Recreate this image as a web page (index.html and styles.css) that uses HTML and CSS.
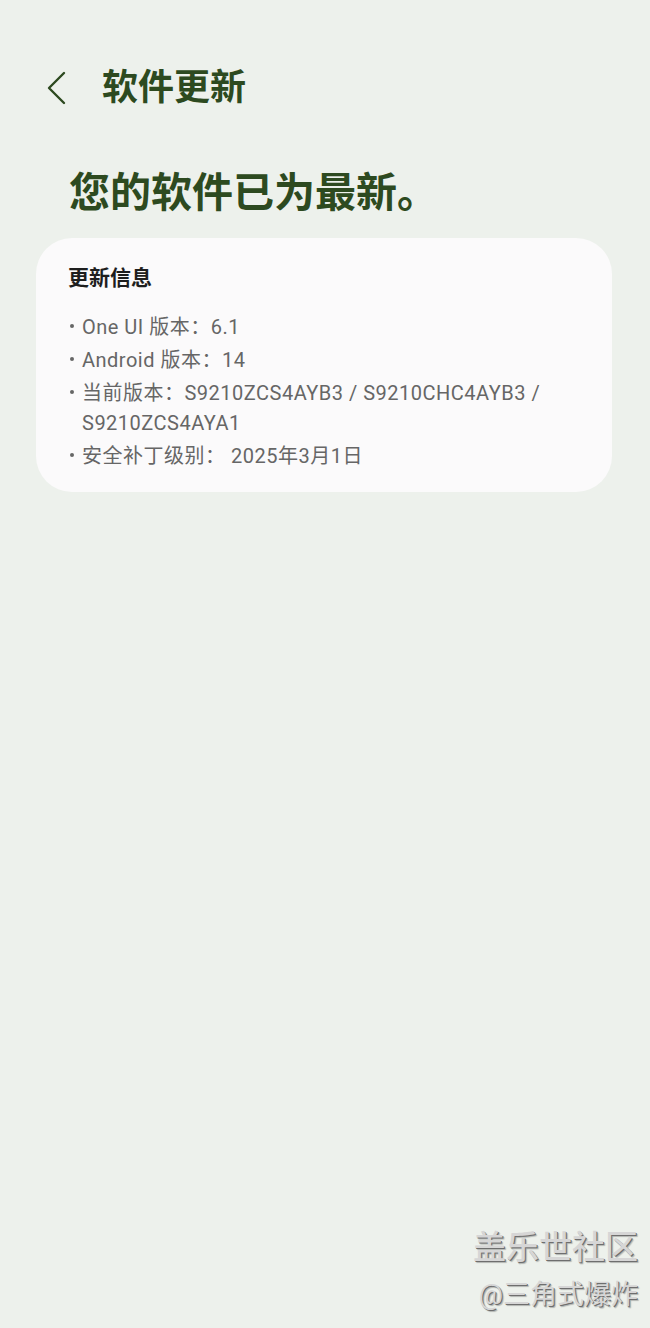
FILE: index.html
```html
<!DOCTYPE html>
<html lang="zh-CN">
<head>
  <meta charset="UTF-8" />
  <meta name="viewport" content="width=device-width, initial-scale=1.0" />
  <title>软件更新</title>
  <link rel="stylesheet" href="styles.css">
</head>
<body>
  <div class="screen">
    <header class="topbar">
      <span class="back">
        <svg width="22" height="36" viewBox="0 0 22 36"><path d="M19 3 L4 18 L19 33" fill="none" stroke="#2d4a20" stroke-width="2.4" stroke-linecap="round" stroke-linejoin="round"/></svg>
      </span>
      <h1 class="title">软件更新</h1>
    </header>

    <h2 class="headline">您的软件已为最新。</h2>

    <section class="card">
      <h3 class="card-title">更新信息</h3>
      <ul class="info">
        <li>One UI 版本：6.1</li>
        <li>Android 版本：14</li>
        <li>当前版本：S9210ZCS4AYB3 / S9210CHC4AYB3 / S9210ZCS4AYA1</li>
        <li>安全补丁级别： 2025年3月1日</li>
      </ul>
    </section>

    <div class="watermark">
      <div class="wm-big">盖乐世社区</div>
      <div class="wm-small">@三角式爆炸</div>
    </div>
  </div>
</body>
</html>
```

FILE: styles.css
```css
html, body {
  margin: 0;
  padding: 0;
}
body {
  background-color: #edf1ec;
  font-family: Roboto, "Noto Sans CJK SC", sans-serif;
  width: 650px;
  height: 1328px;
  overflow: hidden;
}
.screen {
  position: relative;
  height: 1328px;
}
.topbar {
  display: flex;
  align-items: center;
  padding: 68px 0 0 45px;
  height: 40px;
}
.back {
  display: flex;
  width: 22px;
  height: 36px;
}
.title {
  margin: 0 0 0 35px;
  font-size: 36px;
  font-weight: 700;
  color: #2d4a20;
  line-height: 40px;
}
.headline {
  margin: 62px 0 0 69px;
  font-size: 41px;
  font-weight: 700;
  color: #2d4a20;
  line-height: 46px;
}
.card {
  margin: 22px 38px 0 36px;
  background-color: #fbfafb;
  border-radius: 36px;
  padding: 26px 32px 18px 32px;
}
.card-title {
  margin: 0;
  font-size: 21px;
  font-weight: 700;
  color: #1e1e1e;
  line-height: 28px;
}
.info {
  list-style: none;
  margin: 20px 0 0 0;
  padding: 0;
  font-size: 20px;
  color: #666;
  line-height: 30px;
  letter-spacing: 0.5px;
}
.info li {
  position: relative;
  padding-left: 14px;
  margin-bottom: 3px;
}
.info li::before {
  content: "";
  position: absolute;
  left: 2px;
  top: 12px;
  width: 4px;
  height: 4px;
  border-radius: 50%;
  background-color: #666;
}
.watermark {
  position: absolute;
  right: 12px;
  top: 1227px;
  text-align: right;
  color: #d6d6d6;
  text-shadow: 1px 1px 0 #6e6e6e, 2px 2px 1px rgba(0, 0, 0, 0.25);
}
.wm-big {
  font-size: 33px;
  font-weight: 500;
  line-height: 42px;
}
.wm-small {
  font-size: 27px;
  line-height: 36px;
  margin-top: 8px;
}
```
